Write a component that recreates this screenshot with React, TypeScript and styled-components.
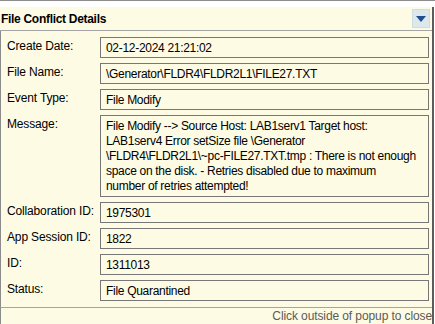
import React, { FC } from "react";
import styled, { createGlobalStyle } from "styled-components";

const GlobalStyle = createGlobalStyle`
    html, body {
        margin: 0;
        padding: 0;
        background: #ffffff;
    }
`

interface IField {
    label: string,
    value: string,
    tall?: boolean,
}

const fields: IField[] = [
    { label: "Create Date:", value: "02-12-2024 21:21:02" },
    { label: "File Name:", value: "\\Generator\\FLDR4\\FLDR2L1\\FILE27.TXT" },
    { label: "Event Type:", value: "File Modify" },
    {
        label: "Message:",
        value: "File Modify --> Source Host: LAB1serv1 Target host:\nLAB1serv4 Error setSize file \\Generator\n\\FLDR4\\FLDR2L1\\~pc-FILE27.TXT.tmp : There is not enough\nspace on the disk. - Retries disabled due to maximum\nnumber of retries attempted!",
        tall: true,
    },
    { label: "Collaboration ID:", value: "1975301" },
    { label: "App Session ID:", value: "1822" },
    { label: "ID:", value: "1311013" },
    { label: "Status:", value: "File Quarantined" },
]

const App: FC = () => {
    return <>
        <GlobalStyle />
        <Shell>
            <Panel>
                <Header>
                    <Title>File Conflict Details</Title>
                    <Toggle>
                        <svg width="10" height="6" viewBox="0 0 10 6">
                            <path d="M0 0 H10 L5 6 Z" fill="#1f4f8c" />
                        </svg>
                    </Toggle>
                </Header>
                <Body>
                    {fields.map(f => (
                        <Row key={f.label}>
                            <Label>{f.label}</Label>
                            <Value tall={f.tall}>{f.value}</Value>
                        </Row>
                    ))}
                </Body>
                <Footer>Click outside of popup to close</Footer>
            </Panel>
        </Shell>
    </>
}

const Shell = styled.div`
    width: 435px;
    height: 324px;
    border-top: 1px solid #8c8c8c;
    padding-top: 6px;
    box-sizing: border-box;
    background: #ffffff;
    font-family: "Liberation Sans", Arial, sans-serif;
    font-size: 12px;
    color: #000;
    overflow: hidden;
`

const Panel = styled.div`
    width: 434px;
    height: 317px;
    box-sizing: border-box;
    background: #fdfbe4;
    border-right: 2px solid #5c5c5c;
    display: flex;
    flex-direction: column;
`

const Header = styled.div`
    height: 23px;
    display: flex;
    align-items: center;
    padding-left: 1px;
    padding-right: 2px;
    border-bottom: 1px solid #a5a5a5;
`

const Title = styled.div`
    font-weight: bold;
    font-size: 12px;
    letter-spacing: -0.3px;
`

const Toggle = styled.div`
    margin-left: auto;
    width: 18px;
    height: 19px;
    box-sizing: border-box;
    background: #dce8ec;
    border: 1px solid #cfdde3;
    display: flex;
    align-items: center;
    justify-content: center;
`

const Body = styled.div`
    flex: 1;
    border-left: 1px solid #8c8c8c;
    padding: 6px 3px 0 6px;
    display: flex;
    flex-direction: column;
    gap: 5px;
    border-bottom: 1px solid #a5a5a5;
`

const Row = styled.div`
    display: grid;
    grid-template-columns: 93px 1fr;
    align-items: start;
`

const Label = styled.div`
    padding-top: 2px;
    line-height: 15px;
    white-space: nowrap;
    letter-spacing: -0.15px;
`

const Value = styled.div<{ tall?: boolean }>`
    border: 1px solid #777777;
    height: ${props => props.tall ? "82px" : "21px"};
    box-sizing: border-box;
    padding: 3px 4px 0 5px;
    line-height: 15px;
    letter-spacing: -0.3px;
    white-space: pre;
    overflow: hidden;
`

const Footer = styled.div`
    height: 16px;
    border-left: 1px solid #8c8c8c;
    text-align: right;
    color: #5e5a55;
    font-size: 12px;
    letter-spacing: -0.1px;
    line-height: 16px;
    white-space: nowrap;
    overflow: hidden;
`

export default App;
